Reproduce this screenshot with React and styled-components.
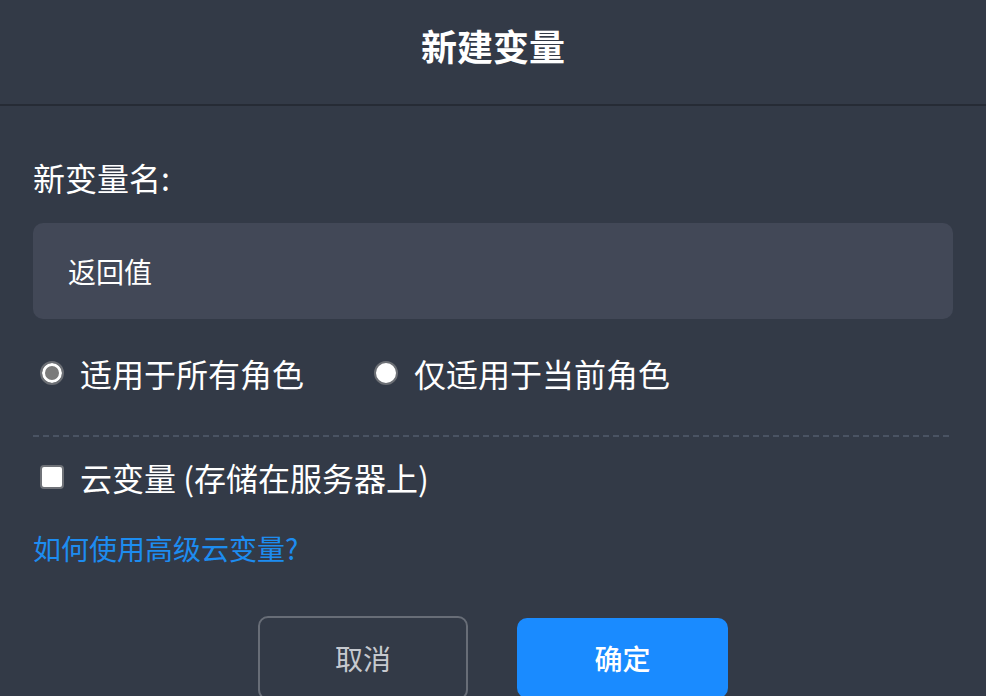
import React from "react";
import styled, { createGlobalStyle } from "styled-components";

const Global = createGlobalStyle`
  html, body { margin: 0; padding: 0; }
  body {
    background: #333a47;
    font-family: "Noto Sans CJK SC", "Noto Sans", sans-serif;
    color: #ffffff;
    width: 986px;
    height: 696px;
    overflow: hidden;
  }
`;

const Dialog = styled.div`
  display: flex;
  flex-direction: column;
  width: 986px;
  height: 696px;
  background: #333a47;
`;

const Header = styled.div`
  height: 104px;
  display: flex;
  align-items: center;
  justify-content: center;
  border-bottom: 2px solid #262b35;
  flex-shrink: 0;
`;

const Title = styled.h1`
  margin: 0 0 14px 0;
  font-size: 36px;
  font-weight: 700;
  line-height: 44px;
  color: #ffffff;
`;

const Body = styled.div`
  display: flex;
  flex-direction: column;
  padding: 0 33px;
`;

const Label = styled.div`
  margin-top: 49px;
  font-size: 32px;
  line-height: 44px;
  color: #ffffff;
`;

const Input = styled.div`
  margin-top: 24px;
  height: 96px;
  box-sizing: border-box;
  padding-left: 35px;
  display: flex;
  align-items: center;
  background: #424857;
  border-radius: 10px;
  font-size: 28px;
  color: #ffffff;
`;

const RadioRow = styled.div`
  margin-top: 32px;
  display: flex;
  align-items: center;
  gap: 70px;
  padding-left: 7px;
`;

const Option = styled.label`
  display: flex;
  align-items: center;
  gap: 16px;
  font-size: 32px;
  line-height: 44px;
  color: #ffffff;
`;

const RadioDot = styled.span`
  width: 24px;
  height: 24px;
  box-sizing: border-box;
  border-radius: 50%;
  border: 2px solid #6c6f75;
  background: ${(p) => (p.$checked ? "#7b7b7b" : "#ffffff")};
  box-shadow: ${(p) => (p.$checked ? "inset 0 0 0 3px #ffffff" : "none")};
  flex-shrink: 0;
`;

const Divider = styled.div`
  margin-top: 40px;
  height: 2px;
  background: repeating-linear-gradient(
    to right,
    #4a5363 0 6px,
    transparent 6px 10px
  );
`;

const CheckRow = styled.label`
  margin-top: 18px;
  padding-left: 7px;
  display: flex;
  align-items: center;
  gap: 16px;
  font-size: 32px;
  line-height: 44px;
  color: #ffffff;
`;

const CheckBox = styled.span`
  width: 24px;
  height: 24px;
  box-sizing: border-box;
  border-radius: 4px;
  border: 2px solid #6f7278;
  background: #ffffff;
  flex-shrink: 0;
`;

const Link = styled.a`
  margin-top: 29px;
  font-size: 28px;
  line-height: 40px;
  color: #1d8cf0;
  text-decoration: none;
  align-self: flex-start;
`;

const Buttons = styled.div`
  margin-top: 48px;
  display: flex;
  justify-content: center;
  align-items: center;
  gap: 49px;
`;

const Button = styled.button`
  width: ${(p) => (p.$primary ? "211px" : "210px")};
  height: ${(p) => (p.$primary ? "80px" : "84px")};
  box-sizing: border-box;
  border-radius: 10px;
  border: ${(p) => (p.$primary ? "none" : "2px solid #686d77")};
  background: ${(p) => (p.$primary ? "#1a8bff" : "transparent")};
  color: ${(p) => (p.$primary ? "#ffffff" : "#c6c9cf")};
  font-family: "Noto Sans CJK SC", sans-serif;
  font-size: 28px;
  font-weight: ${(p) => (p.$primary ? 500 : 400)};
  padding: 0;
  display: flex;
  align-items: center;
  justify-content: center;
`;

export default function App() {
  return (
    <>
      <Global />
      <Dialog>
        <Header>
          <Title>新建变量</Title>
        </Header>
        <Body>
          <Label>新变量名:</Label>
          <Input>返回值</Input>
          <RadioRow>
            <Option>
              <RadioDot $checked />
              适用于所有角色
            </Option>
            <Option>
              <RadioDot />
              仅适用于当前角色
            </Option>
          </RadioRow>
          <Divider />
          <CheckRow>
            <CheckBox />
            云变量 (存储在服务器上)
          </CheckRow>
          <Link href="#">如何使用高级云变量?</Link>
          <Buttons>
            <Button>取消</Button>
            <Button $primary>确定</Button>
          </Buttons>
        </Body>
      </Dialog>
    </>
  );
}
